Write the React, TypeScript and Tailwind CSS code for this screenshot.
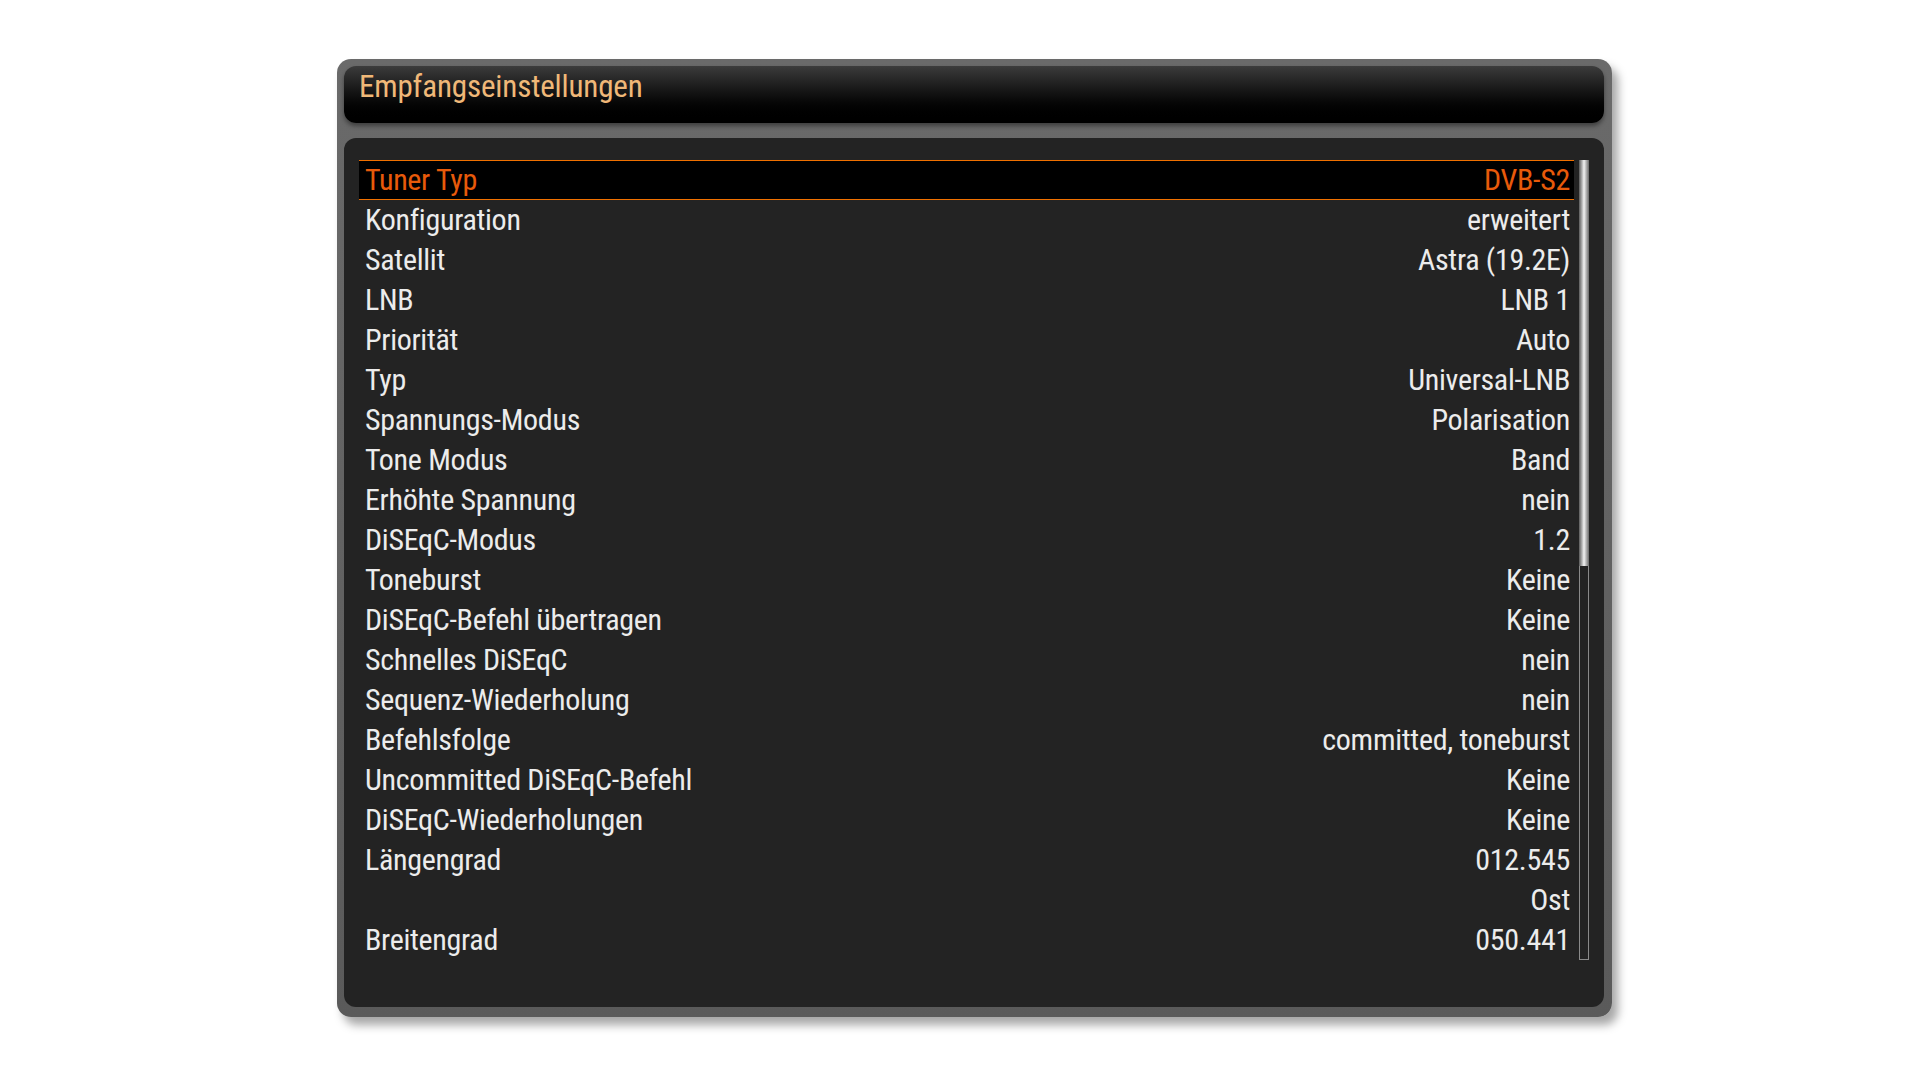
const rows: [string, string][] = [
  ["Tuner Typ", "DVB-S2"],
  ["Konfiguration", "erweitert"],
  ["Satellit", "Astra (19.2E)"],
  ["LNB", "LNB 1"],
  ["Priorität", "Auto"],
  ["Typ", "Universal-LNB"],
  ["Spannungs-Modus", "Polarisation"],
  ["Tone Modus", "Band"],
  ["Erhöhte Spannung", "nein"],
  ["DiSEqC-Modus", "1.2"],
  ["Toneburst", "Keine"],
  ["DiSEqC-Befehl übertragen", "Keine"],
  ["Schnelles DiSEqC", "nein"],
  ["Sequenz-Wiederholung", "nein"],
  ["Befehlsfolge", "committed, toneburst"],
  ["Uncommitted DiSEqC-Befehl", "Keine"],
  ["DiSEqC-Wiederholungen", "Keine"],
  ["Längengrad", "012.545"],
  ["", "Ost"],
  ["Breitengrad", "050.441"],
];

export default function App() {
  return (
    <div
      className="w-[1920px] h-[1080px] bg-white pt-[59px] pl-[337px]"
      style={{ fontFamily: "Roboto, 'Liberation Sans', sans-serif", fontStretch: "condensed" }}
    >
      {/* Window frame */}
      <div className="w-[1275px] h-[958px] rounded-[14px] bg-gradient-to-b from-[#6a6a6a] to-[#5a5a5a] pt-[7px] pl-[7px] pr-[8px] pb-[10px] flex flex-col shadow-[6px_8px_10px_rgba(0,0,0,0.35)]">
        {/* Title bar */}
        <div className="h-[57px] rounded-[12px] bg-gradient-to-b from-[#3c3c3c] via-[#111] to-black px-[15px] pt-[1px] shadow-[0_3px_4px_rgba(0,0,0,0.4)]">
          <h1 className="text-[31px] tracking-[-0.15px] leading-[40px] text-[#f0b878]">Empfangseinstellungen</h1>
        </div>

        {/* Settings list */}
        <div className="mt-[15px] flex-1 rounded-[12px] bg-[#232323] pt-[22px] pl-[15px] pr-[15px] flex">
          <div className="flex-1 flex flex-col">
            {rows.map(([label, value], i) => {
              const active = i === 0;
              return (
                <div
                  key={i}
                  className={
                    active
                      ? "h-[40px] flex items-center justify-between pl-[6px] pr-[4px] bg-black border-y border-[#f07000] text-[#e85a0a]"
                      : "h-[40px] flex items-center justify-between pl-[6px] pr-[4px] text-[#ececec]"
                  }
                >
                  <span className="text-[30px] tracking-[-0.3px] leading-none">{label}</span>
                  <span className="text-[30px] tracking-[-0.3px] leading-none">{value}</span>
                </div>
              );
            })}
          </div>

          {/* Scrollbar */}
          <div className="ml-[5px] w-[10px] h-[800px] flex flex-col">
            <div className="h-[406px] bg-gradient-to-r from-[#5a5a5a] via-[#f4f4f4] to-[#6a6a6a]" />
            <div className="flex-1 border-x border-[#8a8a8a] border-b" />
          </div>
        </div>
      </div>
    </div>
  );
}
